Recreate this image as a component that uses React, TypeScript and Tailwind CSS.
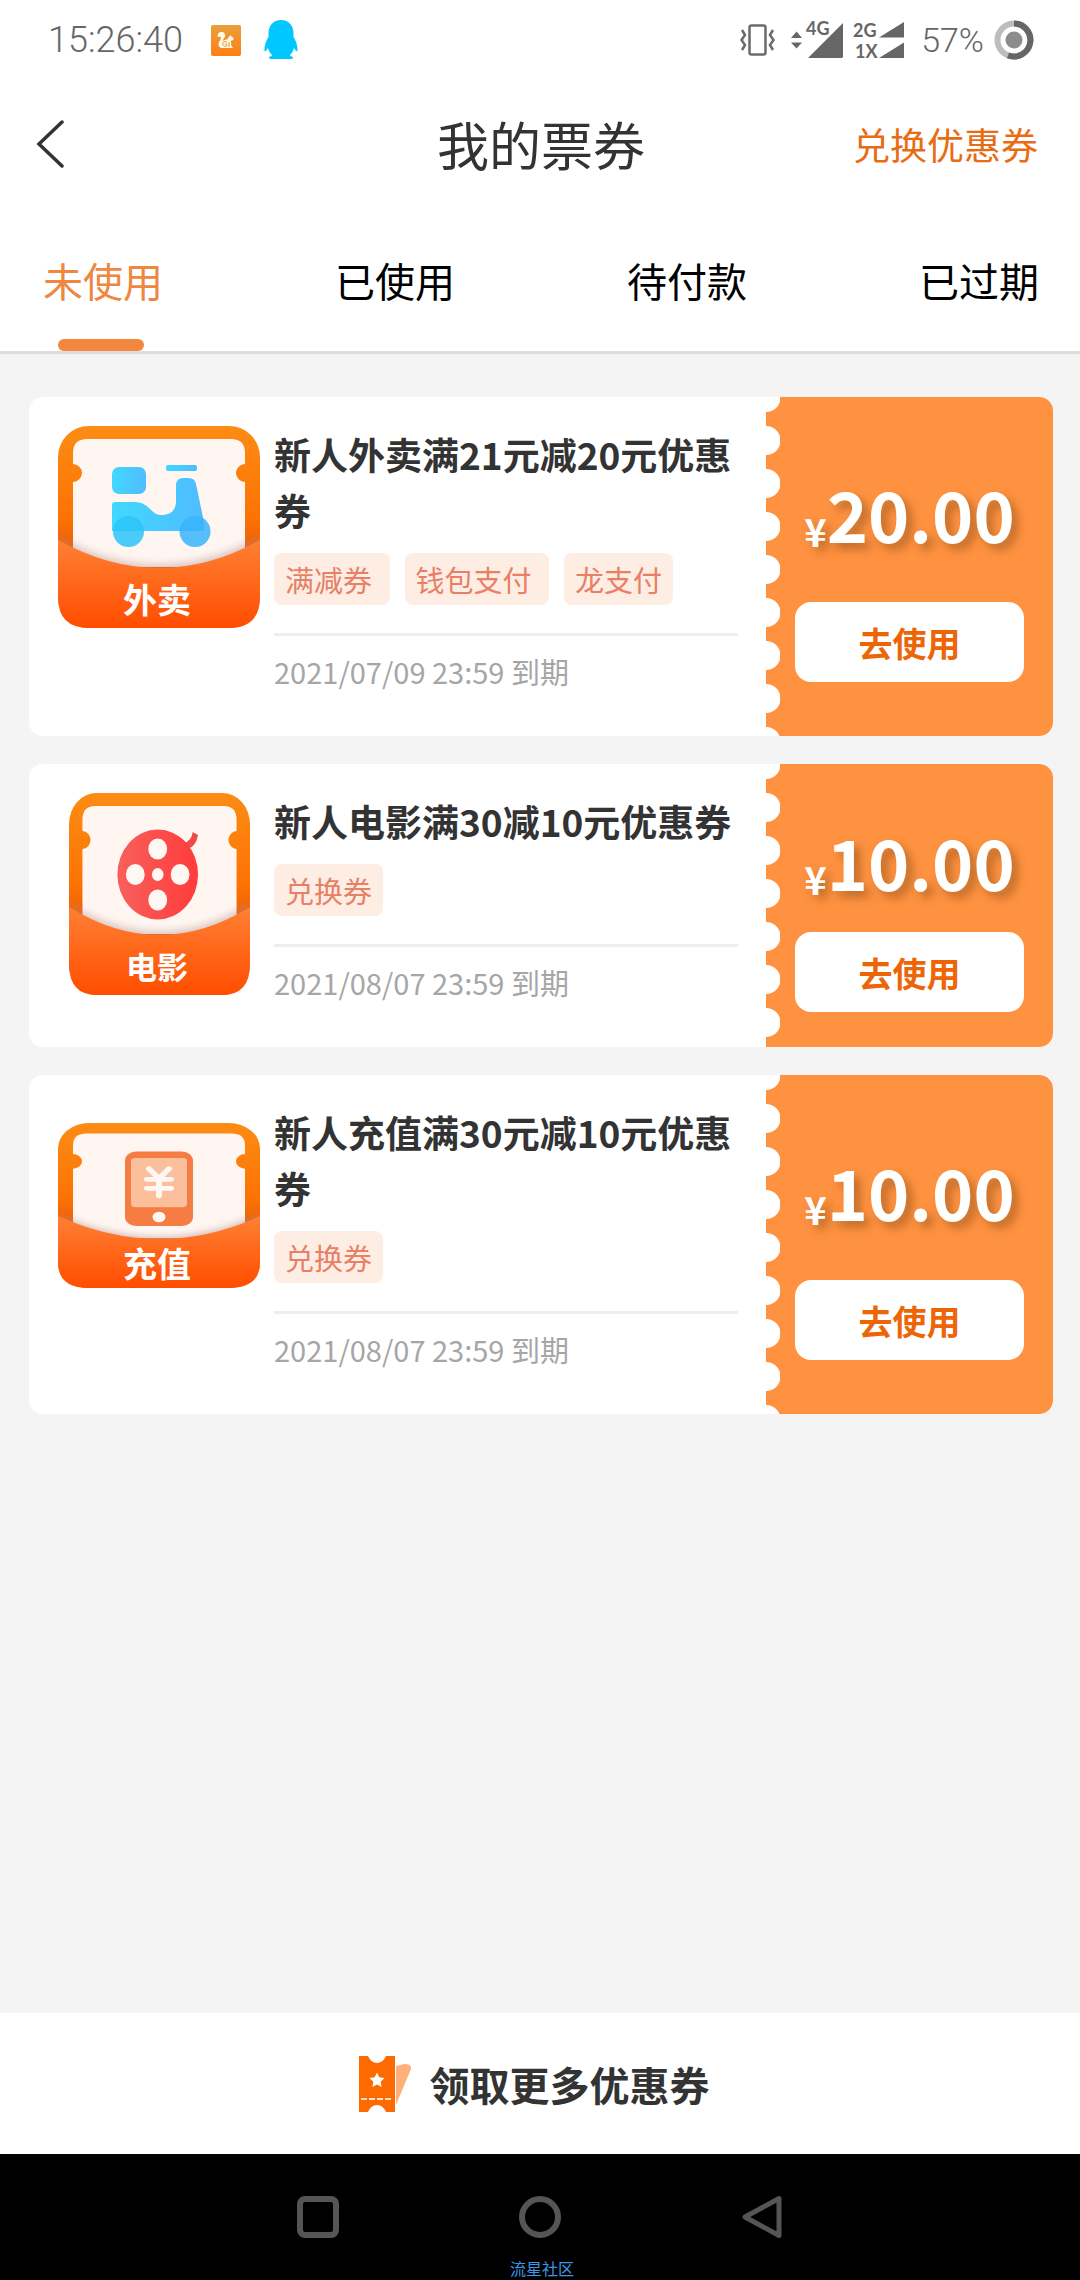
import type { ReactNode } from "react";

const tabs = ["未使用", "已使用", "待付款", "已过期"];

type Coupon = {
  kind: "delivery" | "movie" | "recharge";
  label: string;
  title: string;
  tags: string[];
  expires: string;
  amount: string;
};

const coupons: Coupon[] = [
  {
    kind: "delivery",
    label: "外卖",
    title: "新人外卖满21元减20元优惠券",
    tags: ["满减券 ", "钱包支付 ", "龙支付"],
    expires: "2021/07/09 23:59 到期",
    amount: "20.00",
  },
  {
    kind: "movie",
    label: "电影",
    title: "新人电影满30减10元优惠券",
    tags: ["兑换券"],
    expires: "2021/08/07 23:59 到期",
    amount: "10.00",
  },
  {
    kind: "recharge",
    label: "充值",
    title: "新人充值满30元减10元优惠券",
    tags: ["兑换券"],
    expires: "2021/08/07 23:59 到期",
    amount: "10.00",
  },
];

function StatusBar() {
  return (
    <div className="flex h-20 items-center bg-white pr-[46px] pl-12 font-[Roboto,sans-serif] text-[36px] font-light text-[#666]">
      <span>15:26:40</span>

      <svg className="ml-7 h-[31px] w-[30px]" viewBox="0 0 30 31" aria-hidden="true">
        <defs>
          <linearGradient id="uc" x1="0" y1="0" x2="0" y2="1">
            <stop offset="0" stopColor="#e8a03c" />
            <stop offset="1" stopColor="#ff7e14" />
          </linearGradient>
        </defs>
        <rect width="30" height="31" rx="2" fill="url(#uc)" />
        <path
          d="M7 12c-1-3 1-5 3.500-5s4 2 3.500 4.500c-.5 2-2.500 3-2.500 5 1-1.500 3-2 5-2 0-1.500 1-2.500 2-3l1-1.500 1 1.500c1.500.5 2.500 2 2 3.500-1 .5-2.500.5-3 1 .5 1.500 1 2 .5 4l2 3H10c-2.500-1-3-3.500-2-6 1-2 2-3 2-4.500-.5-1-2-1-3-.5Z"
          fill="#fffbe8"
        />
        <path d="M16 17c-3-1-5 1-4 3s4 2 4 0-2-1-2 0M18 17v5" fill="none" stroke="#f39026" strokeWidth="1" />
      </svg>

      <svg className="ml-[23px] h-10 w-[34px]" viewBox="0 0 34 40" aria-hidden="true">
        <path
          d="M17 0C9 0 4.500 6 4.500 13v4C2 21 0 26 .600 31c.400 1 2-.500 3.400-3 .700 3 2 5 3.600 6.600 1 1 0 1.600-1.600 2-1.500.500-1.500 2.400 1 2.400h20c2.500 0 2.500-1.900 1-2.400-1.600-.400-2.600-1-1.600-2 1.600-1.600 2.900-3.600 3.600-6.600 1.400 2.500 3 4 3.400 3 .600-5-1.400-10-3.900-14v-4C29.500 6 25 0 17 0Z"
          fill="#00c8ff"
        />
      </svg>

      <svg className="ml-auto h-[32px] w-[35px]" viewBox="0 0 35 32" aria-hidden="true">
        <g fill="none" stroke="#6b6b6b" strokeWidth="2.500">
          <rect x="9.500" y="1.500" width="16" height="29" rx="2" />
          <path d="M2 6l3 5-3.500 5L5 21l-3 5M33 6l-3 5 3.500 5-3.500 5 3 5" />
        </g>
      </svg>

      <svg className="ml-4 h-12 w-[114px]" viewBox="0 -6 114 48" aria-hidden="true">
        <g fill="#666">
          <path d="M0 16l5.500-6.500L11 16zM0 20.500l5.500 6L11 20.500zM17 36L52 1v34l-1 1zM88 15.500L113 0v15.500zM88 36l25-15.500V36z" />
          <g className="font-[Lato,sans-serif] text-[18px] font-bold">
            <text x="15" y="13">4G</text>
            <text x="62" y="15">2G</text>
            <text x="64" y="36">1X</text>
          </g>
        </g>
      </svg>

      <span className="ml-4 text-[34px]">57%</span>

      <svg className="ml-2.5 h-10 w-10" viewBox="0 0 40 40" aria-hidden="true">
        <circle cx="20" cy="20" r="16.500" fill="none" stroke="#bdbdbd" strokeWidth="6" />
        <path d="M20 3.500a16.500 16.500 0 1 1-6 31.900" fill="none" stroke="#666" strokeWidth="6" />
        <circle cx="20" cy="20" r="8.500" fill="#8c8c8c" />
      </svg>
    </div>
  );
}

function Header() {
  return (
    <header className="grid h-32 grid-cols-[1fr_auto_1fr] items-center bg-white pr-[42px] pl-9">
      <button type="button" aria-label="返回" className="justify-self-start">
        <svg className="h-12 w-7" viewBox="0 0 28 48" aria-hidden="true">
          <path d="M26 2L3 24l23 22" fill="none" stroke="#333" strokeWidth="3.500" strokeLinecap="round" />
        </svg>
      </button>
      <h1 className="ml-2 text-[52px] leading-none whitespace-nowrap text-[#333]">我的票券</h1>
      <a href="#redeem" className="justify-self-end text-[37px] leading-none whitespace-nowrap text-[#e86c14]">
        兑换优惠券
      </a>
    </header>
  );
}

function Tabs() {
  return (
    <nav className="flex justify-between border-b-3 border-[#ddd] bg-white pt-[42px] pr-[41px] pl-[43px]">
      {tabs.map((tab, i) => (
        <button
          key={tab}
          type="button"
          className={`flex flex-col text-[40px] leading-[60px] ${i === 0 ? "text-[#ee873f]" : "text-black"}`}
        >
          {tab}
          <span className={`mt-[29px] ml-[15px] h-3 w-[86px] rounded-full ${i === 0 ? "bg-[#f3873d]" : ""}`} />
        </button>
      ))}
    </nav>
  );
}

const drawings: Record<Coupon["kind"], ReactNode> = {
  delivery: (
    <g>
      <g fill="url(#blue)">
        <rect x="54" y="41" width="34" height="27" rx="7" />
        <rect x="108" y="39" width="31" height="6" rx="2" />
        <path d="M54 79q0-3 3-3h20c14 0 16 13 26 13s15-5 15-14V60q0-8 7-8h5q7 0 8 6l8 38v9H54Z" />
      </g>
      <circle cx="70.500" cy="105.500" r="15.500" fill="#2bc4f9" fillOpacity="0.85" />
      <circle cx="137" cy="105.500" r="15.500" fill="#38b4fd" fillOpacity="0.85" />
    </g>
  ),
  movie: (
    <g>
      <path d="M128 50q9-2 10-11l6 3q-2 10-9 13Z" fill="#f04a4a" />
      <circle cx="99" cy="81.500" r="45" fill="url(#red)" />
      <g fill="#fff7f3">
        <circle cx="99" cy="56" r="10.500" />
        <circle cx="99" cy="107" r="10.500" />
        <circle cx="74" cy="81.500" r="10.500" />
        <circle cx="124" cy="81.500" r="10.500" />
        <circle cx="99" cy="81.500" r="6.500" />
      </g>
    </g>
  ),
  recharge: (
    <g>
      <rect x="67" y="35" width="68" height="91" rx="11" fill="#f57c42" />
      <rect x="73" y="43" width="56" height="60" rx="4" fill="#fcbf9c" />
      <path d="M91 56l10 12 10-12M89 69h24M89 80h24M101 69v20" fill="none" stroke="#fff7f3" strokeWidth="6" strokeLinecap="round" />
      <circle cx="101" cy="115" r="6.500" fill="#fff7f3" />
    </g>
  ),
};

const iconSizes: Record<Coupon["kind"], string> = {
  delivery: "h-[202px] w-[202px] pb-3 text-[34px]",
  movie: "h-[202px] w-[181px] pb-3 text-[31px]",
  recharge: "h-[165px] w-[202px] pb-2 text-[34px]",
};

function CouponIcon({ kind, label }: { kind: Coupon["kind"]; label: string }) {
  return (
    <div className="flex h-[202px] w-[202px] shrink-0 items-center justify-center">
      <div className={`relative flex items-end justify-center leading-[34px] font-bold text-white ${iconSizes[kind]}`}>
        <svg className="absolute inset-0 h-full w-full" viewBox="0 0 202 202" preserveAspectRatio="none" aria-hidden="true">
          <rect width="202" height="202" rx="31" fill="url(#frame)" />
          <path
            d="M15 27q0-14 14-14h144q14 0 14 14v11a9 9 0 0 0 0 18v85H15V56a9 9 0 0 0 0-18Z"
            fill="#fff6f2"
          />
          {drawings[kind]}
          <g clipPath="url(#rounded)">
            <path d="M0 111Q101 167 202 111V202H0Z" fill="#b48a84" opacity="0.5" filter="url(#soft)" />
          </g>
          <path d="M0 114Q101 170 202 114v57q0 31-31 31H31q-31 0-31-31Z" fill="url(#pocket)" />
        </svg>
        <span className="relative mr-1">{label}</span>
      </div>
    </div>
  );
}

/* gradients shared by the three coupon icons */
function IconDefs() {
  return (
    <svg className="absolute h-0 w-0" aria-hidden="true">
      <defs>
        <linearGradient id="frame" x1="0" y1="0" x2="0" y2="1">
          <stop offset="0" stopColor="#fb8c14" />
          <stop offset="0.450" stopColor="#fd7304" />
          <stop offset="0.650" stopColor="#e85a08" />
        </linearGradient>
        <linearGradient id="pocket" x1="0" y1="0" x2="0" y2="1">
          <stop offset="0" stopColor="#ff8034" />
          <stop offset="1" stopColor="#ff4d00" />
        </linearGradient>
        <linearGradient id="blue" x1="0" y1="0" x2="1" y2="0">
          <stop offset="0" stopColor="#41d8ff" />
          <stop offset="1" stopColor="#4fbcff" />
        </linearGradient>
        <linearGradient id="red" x1="0" y1="0" x2="1" y2="0">
          <stop offset="0" stopColor="#f8605c" />
          <stop offset="1" stopColor="#ff3c3c" />
        </linearGradient>
        <filter id="soft">
          <feGaussianBlur stdDeviation="4" />
        </filter>
        <clipPath id="rounded">
          <rect width="202" height="202" rx="31" />
        </clipPath>
      </defs>
    </svg>
  );
}

function CouponCard({ coupon }: { coupon: Coupon }) {
  return (
    <li className="flex overflow-hidden rounded-[14px] bg-white">
      <div className="flex min-w-0 flex-1 gap-3.5 py-[29px] pr-7 pl-[29px]">
        <CouponIcon kind={coupon.kind} label={coupon.label} />
        <div className="min-w-0 flex-1">
          <h2 className="text-[37px] leading-[56px] font-bold text-[#333]">{coupon.title}</h2>
          <div className="mt-[15px] flex gap-[15px]">
            {coupon.tags.map((tag) => (
              <span
                key={tag}
                className="rounded-lg bg-[#feede3] px-[11px] text-[29px] leading-[52px] whitespace-pre text-[#e87f66]"
              >
                {tag}
              </span>
            ))}
          </div>
          <p className="mt-7 border-t-3 border-[#eee] pt-3.5 pb-[15px] text-[29px] leading-[42px] text-[#a6a6a6]">
            {coupon.expires}
          </p>
        </div>
      </div>

      <div className="flex w-[287px] shrink-0 bg-[#ff9240]">
        <div className="w-3.5 bg-[radial-gradient(circle_at_0_50%,#fff_14px,transparent_15px)] bg-[length:14px_43px] bg-[position:0_-21px]" />
        <div className="flex flex-1 flex-col justify-evenly pr-[29px] pl-[15px]">
          <p className="flex h-[98px] items-end justify-center font-bold text-white [text-shadow:6px_6px_10px_rgba(90,50,10,0.4)]">
            <span className="text-[38px] leading-[36px]">¥</span>
            <span className="text-[70px] leading-[72px]">{coupon.amount}</span>
          </p>
          <button type="button" className="h-20 rounded-2xl bg-white text-[34px] font-bold text-[#ec6608]">
            去使用
          </button>
        </div>
      </div>
    </li>
  );
}

function MoreCoupons() {
  return (
    <button
      type="button"
      className="flex h-[141px] items-center justify-center gap-[18px] bg-white pr-3 text-[40px] font-bold text-[#333]"
    >
      <svg className="h-14 w-[53px]" viewBox="0 0 53 56" aria-hidden="true">
        <path d="M37 10l8-2q8 0 7 5L37 49Z" fill="#ffb07c" />
        <path d="M0 0h9q3 7 9 7t9-7h9v56h-9q-3-7-9-7t-9 7H0Z" fill="#ff6a00" />
        <path d="M18 16.500l2.300 4.800 5.200.700-3.800 3.700.900 5.200-4.600-2.500-4.600 2.500.900-5.200-3.800-3.700 5.200-.700Z" fill="#fff" />
        <path d="M2 43h31" stroke="#fff" strokeWidth="2" strokeDasharray="6 2" opacity="0.8" />
      </svg>
      领取更多优惠券
    </button>
  );
}

function NavigationBar() {
  return (
    <div className="bg-black">
      <div className="flex h-[126px] items-center justify-center gap-[178px]">
        <button type="button" aria-label="最近任务">
          <svg className="h-11 w-11" viewBox="0 0 44 44" fill="none" stroke="#555" strokeWidth="6">
            <rect x="4" y="4" width="36" height="36" rx="5" />
          </svg>
        </button>
        <button type="button" aria-label="主屏幕">
          <svg className="h-11 w-11" viewBox="0 0 44 44" fill="none" stroke="#555" strokeWidth="6">
            <circle cx="22" cy="22" r="18" />
          </svg>
        </button>
        <button type="button" aria-label="后退">
          <svg className="h-11 w-11" viewBox="0 0 44 44" fill="none" stroke="#555" strokeWidth="5" strokeLinejoin="round">
            <path d="M39 3.500v37L5 22Z" />
          </svg>
        </button>
      </div>
      <p className="-mt-6 pl-1 text-center text-base text-[#3f97e4]">流星社区</p>
    </div>
  );
}

export default function App() {
  return (
    <div className="flex min-h-screen flex-col bg-[#f4f4f4] font-['Noto_Sans_CJK_SC',sans-serif]">
      <IconDefs />
      <StatusBar />
      <Header />
      <Tabs />
      <main className="flex-1 pt-[43px] pr-[27px] pb-8 pl-[29px]">
        <ul className="flex flex-col gap-7">
          {coupons.map((coupon) => (
            <CouponCard key={coupon.title} coupon={coupon} />
          ))}
        </ul>
      </main>
      <MoreCoupons />
      <NavigationBar />
    </div>
  );
}
